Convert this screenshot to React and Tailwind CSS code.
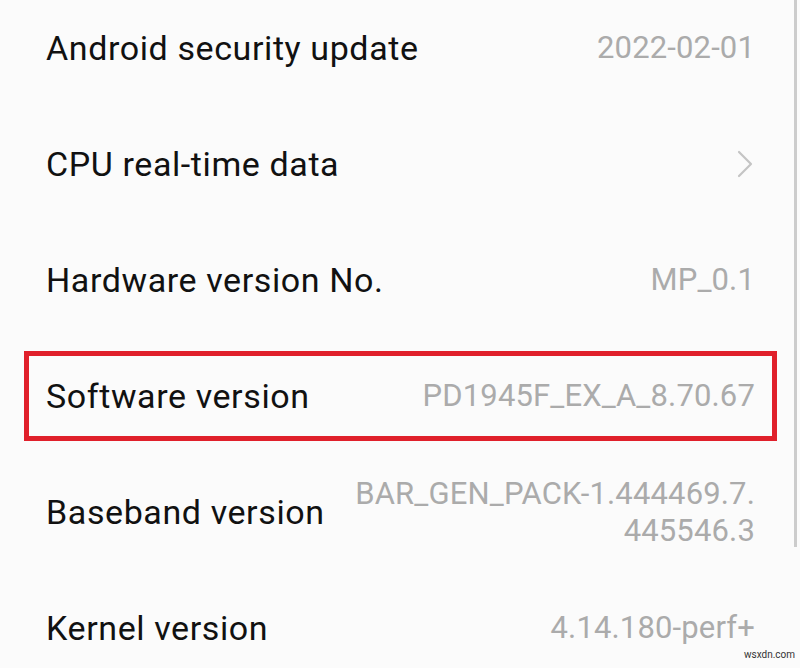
const rows = [
  { label: 'Android security update', value: '2022-02-01' },
  { label: 'CPU real-time data', chevron: true },
  { label: 'Hardware version No.', value: 'MP_0.1' },
  { label: 'Software version', value: 'PD1945F_EX_A_8.70.67', marked: true },
  { label: 'Baseband version', value: ['BAR_GEN_PACK-1.444469.7.', '445546.3'] },
  { label: 'Kernel version', value: '4.14.180-perf+' },
];

function Value({ value, chevron }) {
  if (chevron) {
    return (
      <svg width="18" height="28" viewBox="0 0 18 28" className="mr-[1px]">
        <path d="M3 2 L15 14 L3 26" fill="none" stroke="#c4c4c4" strokeWidth="2.2" strokeLinecap="round" strokeLinejoin="round" />
      </svg>
    );
  }
  if (Array.isArray(value)) {
    return (
      <div className="text-right leading-[37px]">
        {value.map((v, i) => <div key={i}>{v}</div>)}
      </div>
    );
  }
  return <span>{value}</span>;
}

function Row({ label, value, chevron, marked }) {
  const content = (
    <>
      <span className="text-[34px] tracking-[0.6px] text-[#111111]">{label}</span>
      <div className="text-[31px] tracking-[0.15px] text-[#ababab]">
        <Value value={value} chevron={chevron} />
      </div>
    </>
  );
  if (marked) {
    return (
      <div className="h-[116px] flex items-center pl-[24px] pr-[23px]">
        <div className="flex-1 h-[90px] border-[5px] border-[#e0202b] flex items-center justify-between pl-[17px] pr-[17px]">
          {content}
        </div>
      </div>
    );
  }
  return (
    <div className="h-[116px] flex items-center justify-between pl-[46px] pr-[45px]">
      {content}
    </div>
  );
}

export default function App() {
  return (
    <div className="relative w-[800px] h-[668px] overflow-hidden bg-[#fbfbfb]" style={{ fontFamily: 'Roboto, "Noto Sans", sans-serif' }}>
      <div className="-mt-[10px]">
        {rows.map((r, i) => <Row key={i} {...r} />)}
      </div>
      <div className="absolute right-[3px] top-0 w-[3px] h-[547px] bg-[#cccccc]" />
      <div className="absolute right-[5px] bottom-[6px] text-[10px] text-[#333333]">wsxdn.com</div>
    </div>
  );
}
